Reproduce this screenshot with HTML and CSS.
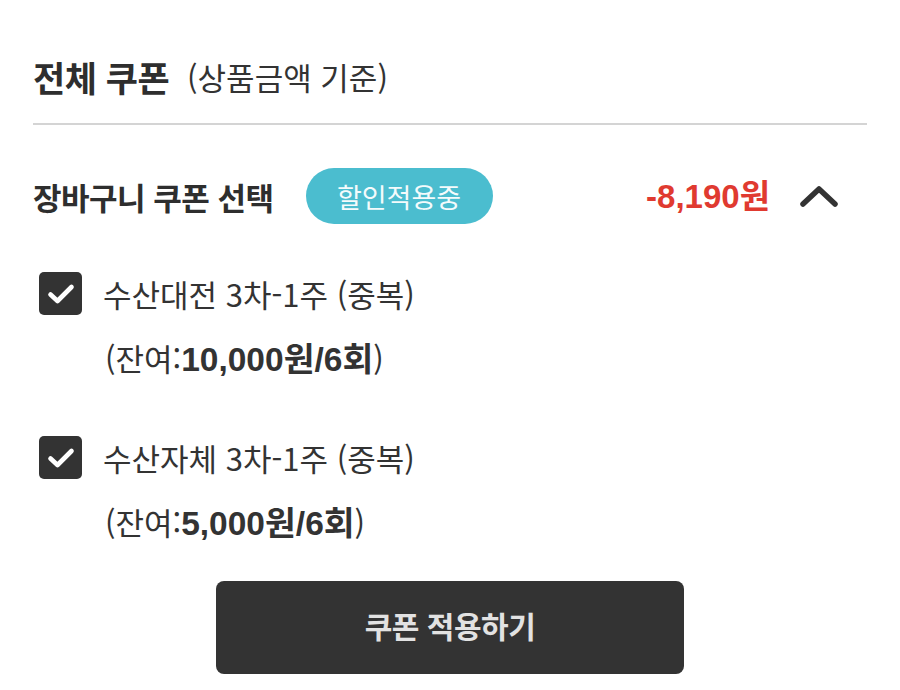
FILE: index.html
```html
<!DOCTYPE html>
<html lang="ko">
<head>
<meta charset="utf-8">
<link rel="stylesheet" href="styles.css">
</head>
<body>
<div class="page">
  <div class="header">
    <span class="title">전체 쿠폰</span>
    <span class="subtitle">(상품금액 기준)</span>
  </div>
  <div class="divider"></div>
  <div class="section-row">
    <span class="section-title">장바구니 쿠폰 선택</span>
    <span class="badge">할인적용중</span>
    <span class="amount">-8,190원</span>
    <svg class="chevron" width="38" height="22" viewBox="0 0 38 22"><path d="M3 19 L19 4 L35 19" fill="none" stroke="#333" stroke-width="5.5" stroke-linecap="round" stroke-linejoin="round"/></svg>
  </div>
  <div class="coupon first">
    <div class="coupon-row">
      <span class="check"><svg width="28" height="22" viewBox="0 0 28 22"><path d="M3.5 11.5 L10.5 18 L24.5 4" fill="none" stroke="#fff" stroke-width="4.6" stroke-linecap="round" stroke-linejoin="round"/></svg></span>
      <span class="coupon-name">수산대전 3차-1주 (중복)</span>
    </div>
    <div class="remain">(잔여:<b>10,000원/6회</b>)</div>
  </div>
  <div class="coupon second">
    <div class="coupon-row">
      <span class="check"><svg width="28" height="22" viewBox="0 0 28 22"><path d="M3.5 11.5 L10.5 18 L24.5 4" fill="none" stroke="#fff" stroke-width="4.6" stroke-linecap="round" stroke-linejoin="round"/></svg></span>
      <span class="coupon-name">수산자체 3차-1주 (중복)</span>
    </div>
    <div class="remain">(잔여:<b>5,000원/6회</b>)</div>
  </div>
  <div class="btn-wrap">
    <button class="apply">쿠폰 적용하기</button>
  </div>
</div>
</body>
</html>
```
FILE: styles.css
```css
html, body {
  margin: 0;
  padding: 0;
  background: #fff;
}
body {
  font-family: "Noto Sans CJK KR", "Noto Sans", sans-serif;
  color: #2e2e2e;
}
.page {
  padding: 0 33px;
  height: 690px;
  overflow: hidden;
}
.header {
  margin-top: 31px;
  height: 90px;
  display: flex;
  align-items: center;
  gap: 18px;
}
.title {
  font-size: 35px;
  font-weight: 700;
  letter-spacing: -0.5px;
  line-height: 1;
}
.subtitle {
  font-size: 31px;
  font-weight: 400;
  color: #333;
  line-height: 1;
}
.divider {
  height: 2px;
  margin-top: 2px;
  background: #d4d4d4;
}
.section-row {
  margin-top: 43px;
  height: 56px;
  display: flex;
  align-items: center;
}
.section-title {
  font-size: 31px;
  font-weight: 700;
  letter-spacing: -0.5px;
  line-height: 1;
}
.badge {
  margin-left: 32px;
  width: 187px;
  height: 56px;
  border-radius: 28px;
  background: #4bbdcf;
  color: #f4fbfc;
  font-size: 27px;
  line-height: 1;
  display: flex;
  align-items: center;
  justify-content: center;
}
.amount {
  margin-left: auto;
  color: #e03a30;
  font-family: "Liberation Sans", "Noto Sans CJK KR", sans-serif;
  font-size: 33px;
  font-weight: 700;
  line-height: 1;
}
.chevron {
  margin-left: 30px;
  margin-right: 29px;
}
.coupon.first {
  margin-top: 48px;
}
.coupon.second {
  margin-top: 58px;
}
.coupon-row {
  height: 43px;
  display: flex;
  align-items: center;
  padding-left: 6px;
}
.check {
  width: 43px;
  height: 43px;
  border-radius: 5px;
  background: #333;
  display: flex;
  align-items: center;
  justify-content: center;
}
.coupon-name {
  margin-left: 21px;
  font-size: 31px;
  color: #333;
  line-height: 1;
}
.remain {
  margin-top: 23px;
  height: 40px;
  line-height: 40px;
  padding-left: 72px;
  font-size: 31px;
  color: #333;
}
.remain b {
  font-family: "Liberation Sans", "Noto Sans CJK KR", sans-serif;
  font-weight: 700;
  font-size: 33.5px;
}
.btn-wrap {
  margin-top: 39px;
  display: flex;
  justify-content: center;
}
.apply {
  width: 468px;
  height: 93px;
  padding-bottom: 6px;
  border: none;
  border-radius: 8px;
  background: #333;
  color: #e2e2e2;
  font-family: "Noto Sans CJK KR", sans-serif;
  font-size: 30px;
  font-weight: 700;
  letter-spacing: -0.5px;
}
```
